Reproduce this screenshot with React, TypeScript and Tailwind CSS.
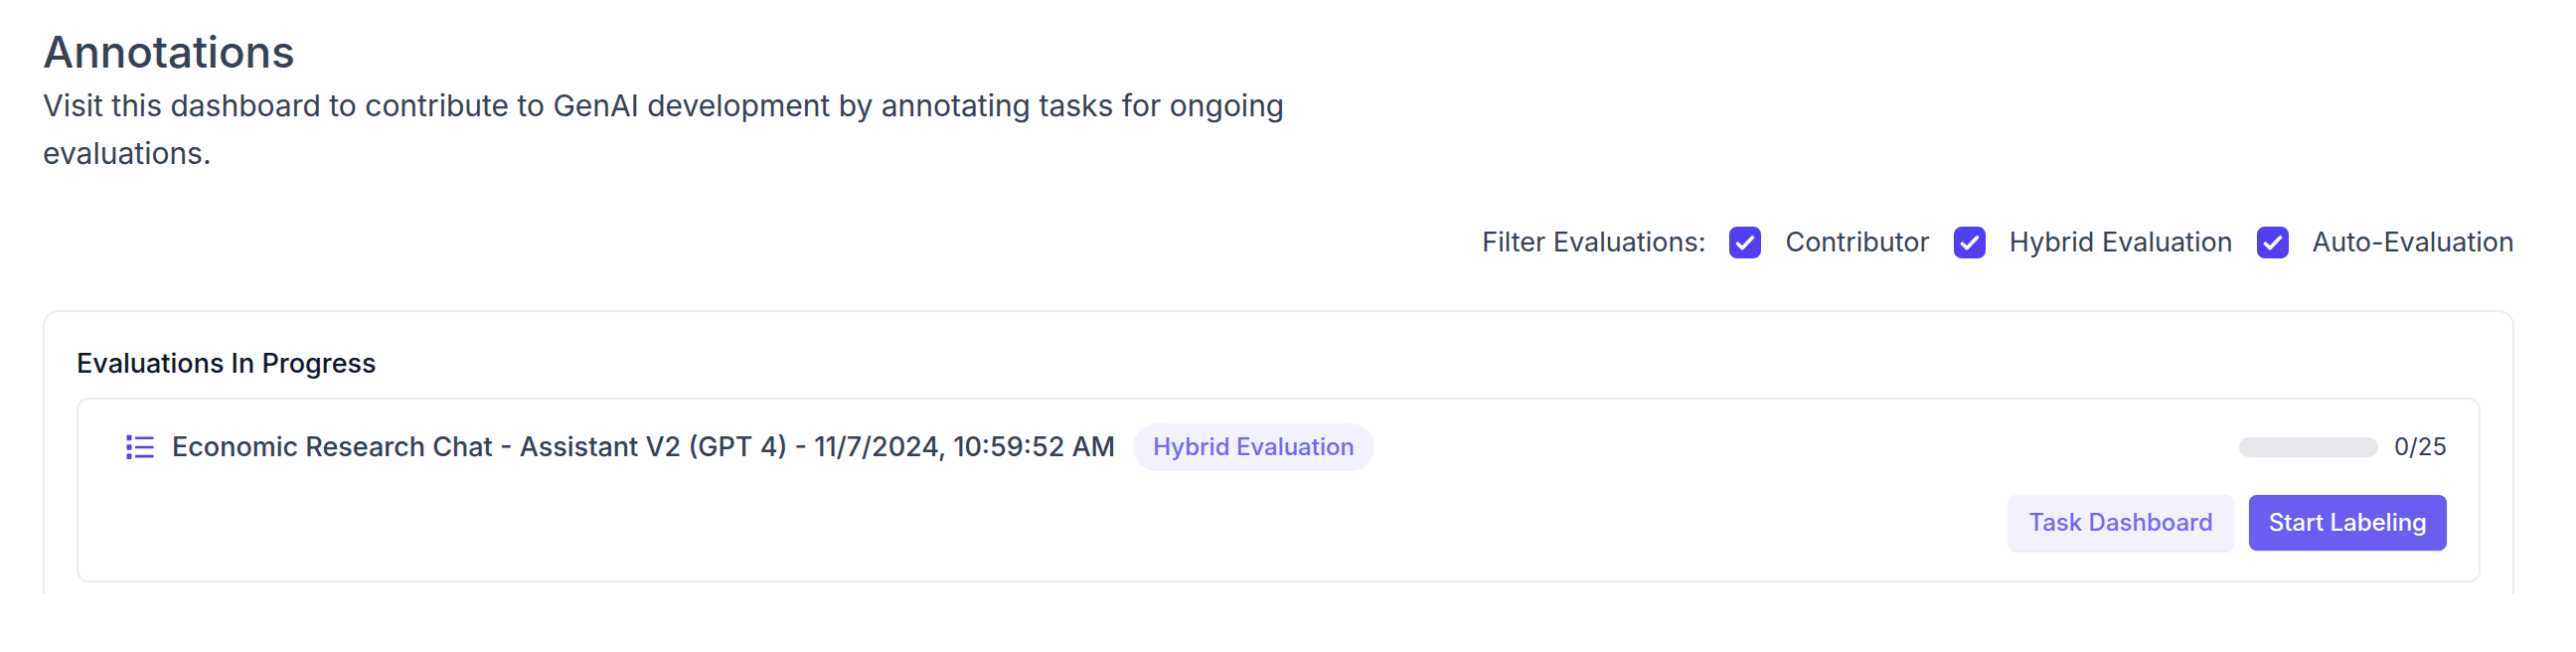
import * as React from 'react';
import { clsx } from 'clsx';

interface Evaluation {
  id: string;
  name: string;
  type: string;
  completed: number;
  total: number;
}

const filterOptions = ['Contributor', 'Hybrid Evaluation', 'Auto-Evaluation'];

const evaluations: Evaluation[] = [
  {
    id: 'economic-research-chat',
    name: 'Economic Research Chat - Assistant V2 (GPT 4) - 11/7/2024, 10:59:52 AM',
    type: 'Hybrid Evaluation',
    completed: 0,
    total: 25,
  },
];

function ListIcon() {
  return (
    <svg viewBox="0 0 28 26" className="h-[26px] w-7 shrink-0 text-[#4f3ff5]" fill="currentColor" aria-hidden="true">
      <rect x="0.5" y="0.8" width="5" height="5.5" rx="1" />
      <rect x="0.5" y="10.2" width="5" height="5.5" rx="1" />
      <rect x="0.5" y="19.4" width="5" height="5.5" rx="1" />
      <rect x="9" y="2.4" width="18.5" height="2.6" rx="0.4" />
      <rect x="9" y="11.7" width="18.5" height="2.6" rx="0.4" />
      <rect x="9" y="20.8" width="18.5" height="2.6" rx="0.4" />
    </svg>
  );
}

function FilterCheckbox({
  label,
  checked,
  onChange,
}: {
  label: string;
  checked: boolean;
  onChange: () => void;
}) {
  return (
    <label className="flex cursor-pointer items-center gap-6">
      <span className="grid h-8 w-8 place-items-center">
        <input
          type="checkbox"
          checked={checked}
          onChange={onChange}
          className="col-start-1 row-start-1 h-8 w-8 appearance-none rounded-lg border-2 border-gray-300 checked:border-[#4f3ff5] checked:bg-[#4f3ff5]"
        />
        {checked && (
          <svg viewBox="0 0 32 32" className="pointer-events-none col-start-1 row-start-1 h-8 w-8" fill="none" aria-hidden="true">
            <path d="M8.5 17.2l4.7 4.4 10.3-10.8" stroke="white" strokeWidth="3.6" strokeLinecap="round" strokeLinejoin="round" />
          </svg>
        )}
      </span>
      {label}
    </label>
  );
}

function ActionButton({ children, primary }: { children: React.ReactNode; primary?: boolean }) {
  return (
    <button
      type="button"
      className={clsx(
        'h-14 rounded-lg px-5 text-2xl font-medium shadow-sm',
        primary ? 'bg-[#6a5df1] text-white' : 'bg-[#f3f1fe] text-[#7468f3]'
      )}
    >
      {children}
    </button>
  );
}

function EvaluationCard({ evaluation }: { evaluation: Evaluation }) {
  const percent = (evaluation.completed / evaluation.total) * 100;

  return (
    <li className="rounded-xl border-2 border-[#ededf1] pt-6 pr-8 pb-[30px] pl-12">
      <div className="flex items-center justify-between">
        <div className="flex items-center gap-[18px]">
          <ListIcon />
          <p className="text-[27px] leading-10 font-medium text-gray-700">{evaluation.name}</p>
          <span className="rounded-full bg-[#f3f1fe] px-5 py-2 text-2xl font-medium text-[#7468f3]">
            {evaluation.type}
          </span>
        </div>
        <div className="flex items-center gap-4">
          <div className="h-5 w-[140px] overflow-hidden rounded-full bg-gray-200">
            <div className="h-full bg-[#6a5df1]" style={{ width: `${percent}%` }} />
          </div>
          <span className="text-2xl text-gray-700">
            {evaluation.completed}/{evaluation.total}
          </span>
        </div>
      </div>
      <div className="mt-6 flex justify-end gap-4">
        <ActionButton>Task Dashboard</ActionButton>
        <ActionButton primary>Start Labeling</ActionButton>
      </div>
    </li>
  );
}

export default function App() {
  const [activeFilters, setActiveFilters] = React.useState(filterOptions);

  const toggleFilter = (option: string) => {
    setActiveFilters((current) =>
      current.includes(option) ? current.filter((f) => f !== option) : [...current, option]
    );
  };

  const visible = evaluations.filter((e) => activeFilters.includes(e.type));

  return (
    <main className="bg-white pt-[22px] pr-[62px] pl-[43px] font-['Inter',sans-serif] text-gray-700">
      {/* Header */}
      <h1 className="text-[44px] leading-[60px] font-medium">Annotations</h1>
      <p className="max-w-7xl text-[30px] leading-[48px]">
        Visit this dashboard to contribute to GenAI development by annotating tasks for ongoing evaluations.
      </p>

      {/* Filters */}
      <div className="mt-[46px] flex flex-wrap items-center justify-end gap-6 text-[27px] leading-10">
        <span>Filter Evaluations:</span>
        {filterOptions.map((option) => (
          <FilterCheckbox
            key={option}
            label={option}
            checked={activeFilters.includes(option)}
            onChange={() => toggleFilter(option)}
          />
        ))}
      </div>

      {/* In progress */}
      <section className="mt-12 rounded-t-2xl border-2 border-b-0 border-[#ededf1] px-8 pt-8 pb-3">
        <h2 className="text-[27px] leading-10 font-medium text-gray-900">Evaluations In Progress</h2>
        <ul className="mt-3.5">
          {visible.map((evaluation) => (
            <EvaluationCard key={evaluation.id} evaluation={evaluation} />
          ))}
        </ul>
      </section>
    </main>
  );
}
